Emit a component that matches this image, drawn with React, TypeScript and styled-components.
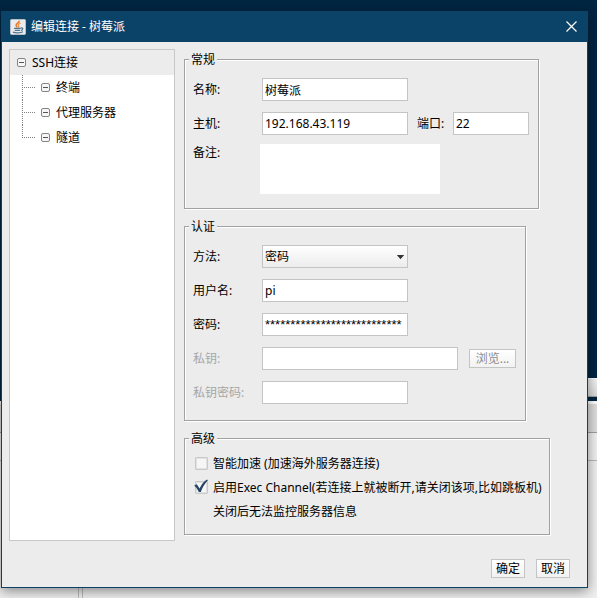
import React, { useState } from 'react';
import styled, { createGlobalStyle } from 'styled-components';

const GlobalStyle = createGlobalStyle`
  * { box-sizing: border-box; }
  body {
    margin: 0;
    background: #ececec;
    color: #000;
    font: 12px/17px "Noto Sans", "Noto Sans CJK SC", sans-serif;
  }
  button, input, select, textarea { font: inherit; color: inherit; }
`;

const Desktop = styled.div`
  display: grid;
  grid-template-columns: minmax(0, 1fr);
  min-height: 100vh;
  & > * { grid-area: 1 / 1; }
`;

const Backdrop = styled.div`
  display: flex;
  flex-direction: column;
  background: #002642;
`;

const Console = styled.div`
  height: 378px;
`;

const StatusBar = styled.div`
  height: 19px;
  margin-left: 8px;
  border-top: 1px solid #fff;
  border-bottom: 1px solid #a0a0a0;
  background: linear-gradient(#f4f4f4, #dcdcdc);
`;

const Divider = styled.div`
  height: 4px;
`;

const TabStrip = styled.div`
  height: 32px;
  background: #dedede;
  border-top: 3px solid #fff;
  border-bottom: 1px solid #a0a0a0;
`;

const PathBar = styled.div`
  height: 28px;
  background: #f2f2f2;
  border-bottom: 1px solid #b8b8b8;
`;

const Files = styled.div`
  flex: 1;
  display: flex;
  background: #f0f0f0;
`;

const FileTree = styled.div`
  width: 83px;
  border-right: 1px solid #bcbcbc;
  &::after {
    content: "";
    display: block;
    height: 100%;
    margin-right: 3px;
    border-right: 1px solid #bcbcbc;
  }
`;

const Stage = styled.div`
  display: flex;
  padding: 11px 9px 10px 1px;
`;

const Window = styled.section`
  flex: 1;
  min-width: 0;
  display: flex;
  flex-direction: column;
  background: #ececec;
  border: 1px solid #0b4268;
  border-top: 0;
  box-shadow: 0 3px 12px rgba(0, 0, 0, 0.45);
`;

const TitleBar = styled.header`
  display: flex;
  align-items: center;
  gap: 5px;
  height: 31px;
  padding: 0 8px;
  background: #0b4268;
  color: #fff;
`;

const Title = styled.h1`
  flex: 1;
  margin: 0;
  font-size: 12px;
  font-weight: 400;
`;

const CloseButton = styled.button`
  display: flex;
  padding: 2px;
  border: 0;
  background: none;
`;

const Body = styled.div`
  flex: 1;
  display: flex;
  gap: 9px;
  padding: 7px 7px 0;
`;

const Tree = styled.nav`
  flex: none;
  width: 166px;
  border: 1px solid #c8c8c8;
  background: #fff;
`;

const TreeList = styled.ul`
  margin: 0;
  padding: 0;
  list-style: none;
`;

const TreeItem = styled.button<{ $child?: boolean; $selected?: boolean }>`
  display: flex;
  align-items: center;
  gap: 6px;
  width: 100%;
  height: 25px;
  padding: 0 0 0 ${(p) => (p.$child ? 12 : 7)}px;
  border: 0;
  background: ${(p) => (p.$selected ? '#ececec' : 'none')};
  text-align: left;
`;

const Panels = styled.form`
  display: flex;
  flex-direction: column;
  align-items: flex-start;
  gap: 9px;
  padding: 2px 0 6px;
`;

const Group = styled.fieldset`
  min-width: 0;
  margin: 0;
  padding: 8px 7px 14px 8px;
  border: 1px solid #a2a2a2;
  box-shadow: inset 1px 1px 0 #fff, 1px 1px 0 #fff;
`;

const Legend = styled.legend`
  margin-left: -4px;
  padding: 0 2px;
  background: #ececec;
`;

const Rows = styled.div`
  display: flex;
  flex-direction: column;
  gap: 7px;
`;

const Row = styled.div<{ $top?: boolean }>`
  display: flex;
  align-items: ${(p) => (p.$top ? 'flex-start' : 'center')};
`;

const Label = styled.label<{ $disabled?: boolean }>`
  width: 67px;
  color: ${(p) => (p.$disabled ? '#a6a6a6' : '#000')};
`;

const PortLabel = styled(Label)`
  width: 34px;
  margin-left: 7px;
`;

const fieldWidths = { short: 76, normal: 146, long: 196 };

const Field = styled.input<{ $size?: keyof typeof fieldWidths }>`
  width: ${(p) => fieldWidths[p.$size ?? 'normal']}px;
  height: 23px;
  margin: 2px;
  padding: 0 2px;
  border: 1px solid #c4c4c4;
  background: #fff;
`;

const SecretField = styled(Field)`
  font-family: "Liberation Sans", sans-serif;
  font-size: 13px;
`;

const Memo = styled.textarea`
  width: 180px;
  height: 50px;
  padding: 2px;
  border: 0;
  background: #fff;
  resize: none;
`;

const SelectBox = styled.div`
  position: relative;
  width: 146px;
  margin: 2px;
`;

const Select = styled.select`
  display: block;
  appearance: none;
  width: 100%;
  height: 23px;
  padding: 0 2px;
  border: 1px solid #c4c4c4;
  border-radius: 0;
  background: linear-gradient(#fff, #ececec);
`;

const SelectArrow = styled.svg`
  position: absolute;
  top: 10px;
  right: 3px;
  pointer-events: none;
`;

const Button = styled.button`
  height: 19px;
  padding: 0 4px;
  border: 1px solid #c4c4c4;
  background: linear-gradient(#fff, #f2f2f2);
  line-height: 17px;
`;

const BrowseButton = styled(Button)`
  width: 47px;
  margin: 2px 2px 2px 9px;
  &:disabled { color: #8c8c8c; }
`;

const Option = styled.label`
  display: flex;
  align-items: center;
  gap: 5px;
  padding-left: 2px;
`;

const OptionNote = styled.p`
  margin: 0;
  padding-left: 20px;
`;

const CheckBox = styled.span`
  position: relative;
  display: flex;
`;

const CheckInput = styled.input`
  appearance: none;
  width: 13px;
  height: 13px;
  margin: 0;
  border: 1px solid #c8c8c8;
  border-radius: 1px;
  background: #f6f6f6;
  box-shadow: inset 0 0 0 1px #e2e2e2;
`;

const CheckMark = styled.svg`
  position: absolute;
  left: -1px;
  bottom: 0;
  pointer-events: none;
`;

const Footer = styled.footer`
  display: flex;
  justify-content: flex-end;
  gap: 11px;
  padding: 18px 17px 9px;
`;

function JavaIcon() {
  return (
    <svg width="16" height="16" viewBox="0 0 16 16" aria-hidden="true">
      <rect x="0.5" y="0.5" width="15" height="15" rx="1" fill="#e9ebec" stroke="#b9c0c5" />
      <path d="M9.2 1.6C9.8 3.8 5.8 4.4 6.1 6.3c.1.9 1 1.2 1.2 2.1" fill="none" stroke="#e8762c" strokeWidth="1.5" />
      <path d="M10.6 4C8.5 4.8 7.8 5.8 8.6 6.8c.5.7.2 1.2-.4 1.6" fill="none" stroke="#f0953f" strokeWidth="1.3" />
      <path d="M4.1 9.4h6.6M4.8 11.3h5.4M10.8 8.9c2.6-.6 2.5 2 .2 2.5" fill="none" stroke="#4f7591" strokeWidth="1.2" />
      <path d="M3 13.1c2.5 1 7.8.9 10-.3" fill="none" stroke="#4f7591" strokeWidth="1.3" />
    </svg>
  );
}

function CollapseIcon() {
  return (
    <svg width="9" height="9" viewBox="0 0 9 9" aria-hidden="true">
      <rect x="0.5" y="0.5" width="8" height="8" rx="1.5" fill="#f6f6f6" stroke="#858585" />
      <path d="M2 4.5h5" stroke="#555" />
    </svg>
  );
}

function Branch({ last }: { last?: boolean }) {
  return (
    <svg width="13" height="25" viewBox="0 0 13 25" aria-hidden="true">
      <path d={last ? 'M0.5 0v13' : 'M0.5 0v25'} stroke="#808080" strokeDasharray="1 1" />
      <path d="M0 12.5h13" stroke="#808080" strokeDasharray="1 1" />
    </svg>
  );
}

const children = ['终端', '代理服务器', '隧道'];

function Check({ id, initial }: { id: string; initial: boolean }) {
  const [checked, setChecked] = useState(initial);
  return (
    <CheckBox>
      <CheckInput id={id} type="checkbox" checked={checked} onChange={() => setChecked(!checked)} />
      {checked && (
        <CheckMark width="15" height="15" viewBox="0 0 15 15" aria-hidden="true">
          <path d="M0.2 6.4 2.8 5.2 5.6 9.4C7.4 5.4 9.6 2.6 13 .4l.9.8C10.6 4.6 8.4 8.4 6.8 13H4.8C3.7 10.6 2.2 8.2.2 6.4Z" fill="#264466" />
        </CheckMark>
      )}
    </CheckBox>
  );
}

export default function App() {
  return (
    <>
      <GlobalStyle />
      <Desktop>
        <Backdrop aria-hidden="true">
          <Console />
          <StatusBar />
          <Divider />
          <TabStrip />
          <PathBar />
          <Files><FileTree /></Files>
        </Backdrop>
        <Stage>
          <Window role="dialog" aria-labelledby="dialog-title">
            <TitleBar>
              <JavaIcon />
              <Title id="dialog-title">编辑连接 - 树莓派</Title>
              <CloseButton type="button" aria-label="关闭">
                <svg width="11" height="11" viewBox="0 0 11 11" aria-hidden="true">
                  <path d="M0.5 0.5l10 10M10.5 0.5l-10 10" stroke="#fff" strokeWidth="1.2" />
                </svg>
              </CloseButton>
            </TitleBar>
            <Body>
              <Tree>
                <TreeList>
                  <li>
                    <TreeItem type="button" $selected><CollapseIcon />SSH连接</TreeItem>
                    <TreeList>
                      {children.map((name, i) => (
                        <li key={name}>
                          <TreeItem type="button" $child>
                            <Branch last={i === children.length - 1} />
                            <CollapseIcon />
                            {name}
                          </TreeItem>
                        </li>
                      ))}
                    </TreeList>
                  </li>
                </TreeList>
              </Tree>
              <Panels id="connection" onSubmit={(e) => e.preventDefault()}>
                <Group>
                  <Legend>常规</Legend>
                  <Rows>
                    <Row>
                      <Label htmlFor="name">名称:</Label>
                      <Field id="name" defaultValue="树莓派" />
                    </Row>
                    <Row>
                      <Label htmlFor="host">主机:</Label>
                      <Field id="host" defaultValue="192.168.43.119" />
                      <PortLabel htmlFor="port">端口:</PortLabel>
                      <Field id="port" $size="short" defaultValue="22" />
                    </Row>
                    <Row $top>
                      <Label htmlFor="memo">备注:</Label>
                      <Memo id="memo" />
                    </Row>
                  </Rows>
                </Group>
                <Group>
                  <Legend>认证</Legend>
                  <Rows>
                    <Row>
                      <Label htmlFor="method">方法:</Label>
                      <SelectBox>
                        <Select id="method" defaultValue="password">
                          <option value="password">密码</option>
                          <option value="key">公钥</option>
                        </Select>
                        <SelectArrow width="9" height="5" viewBox="0 0 9 5" aria-hidden="true">
                          <path d="M0.8 0h7.4L4.5 4.2Z" fill="#333" />
                        </SelectArrow>
                      </SelectBox>
                    </Row>
                    <Row>
                      <Label htmlFor="user">用户名:</Label>
                      <Field id="user" defaultValue="pi" />
                    </Row>
                    <Row>
                      <Label htmlFor="secret">密码:</Label>
                      <SecretField id="secret" autoComplete="off" defaultValue={'*'.repeat(27)} />
                    </Row>
                    <Row>
                      <Label htmlFor="key" $disabled>私钥:</Label>
                      <Field id="key" $size="long" disabled />
                      <BrowseButton type="button" disabled>浏览...</BrowseButton>
                    </Row>
                    <Row>
                      <Label htmlFor="key-secret" $disabled>私钥密码:</Label>
                      <Field id="key-secret" disabled />
                    </Row>
                  </Rows>
                </Group>
                <Group>
                  <Legend>高级</Legend>
                  <Rows>
                    <Option htmlFor="boost">
                      <Check id="boost" initial={false} />
                      智能加速 (加速海外服务器连接)
                    </Option>
                    <Option htmlFor="exec">
                      <Check id="exec" initial />
                      启用Exec Channel(若连接上就被断开,请关闭该项,比如跳板机)
                    </Option>
                    <OptionNote>关闭后无法监控服务器信息</OptionNote>
                  </Rows>
                </Group>
              </Panels>
            </Body>
            <Footer>
              <Button type="submit" form="connection">确定</Button>
              <Button type="button">取消</Button>
            </Footer>
          </Window>
        </Stage>
      </Desktop>
    </>
  );
}
